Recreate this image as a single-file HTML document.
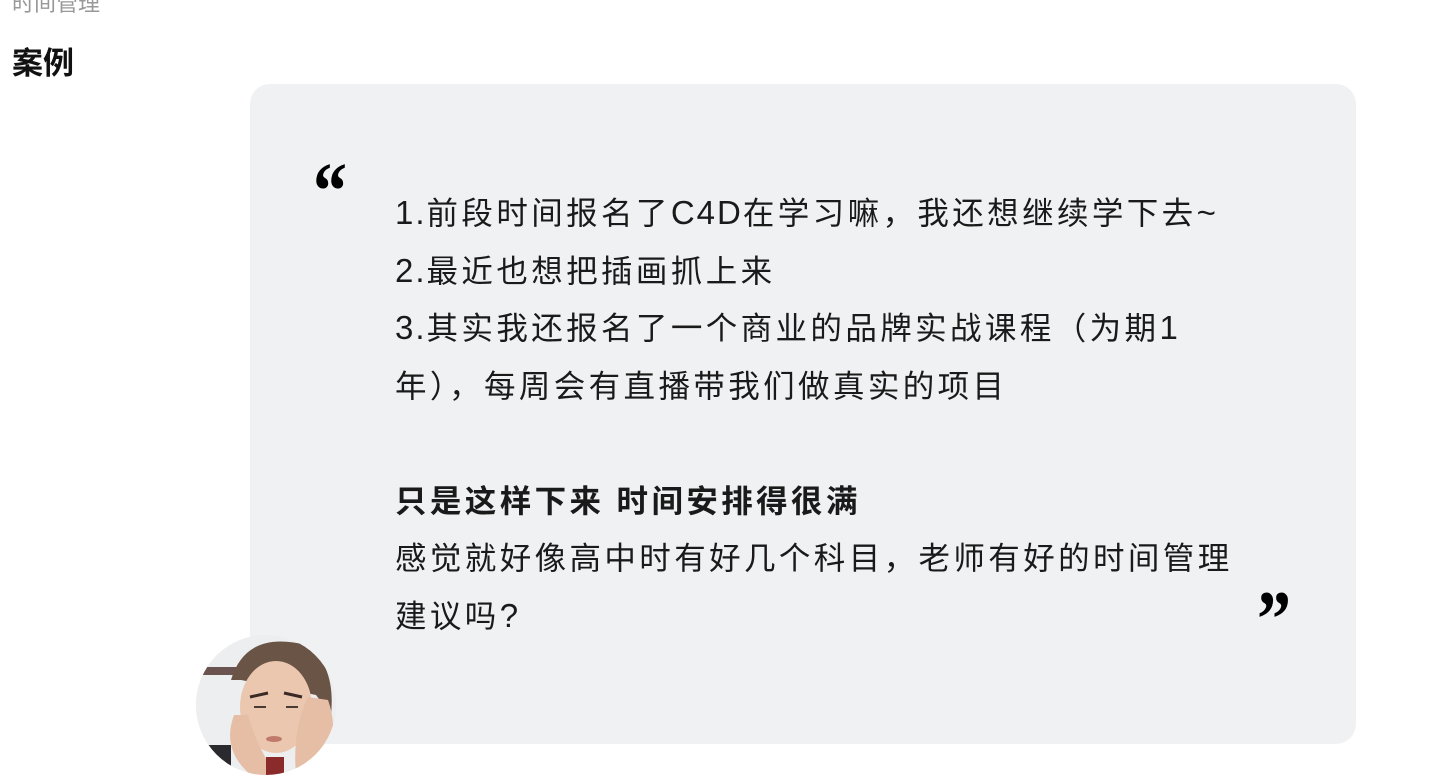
<!DOCTYPE html>
<html><head><meta charset="utf-8"><style>
html,body{margin:0;padding:0;background:#fff;width:1446px;height:782px;overflow:hidden;position:relative;font-family:"Liberation Sans","Noto Sans CJK SC",sans-serif}
.top{position:absolute;left:12px;top:-14px;font-size:22px;color:#999}
.h{position:absolute;left:12px;top:38px;font-size:31px;font-weight:bold;color:#111}
.card{position:absolute;left:250px;top:84px;width:1106px;height:660px;background:#f0f1f3;border-radius:20px}
.txt{position:absolute;left:395px;top:185px;width:846px;font-size:31.5px;line-height:57.5px;letter-spacing:3.4px;color:#1a1a1a}
.l{letter-spacing:2px;font-size:33px;line-height:1}
.q{position:absolute;font-family:"Liberation Serif",serif;font-weight:bold;font-size:80px;line-height:1;color:#000}
.av{position:absolute;left:196px;top:635px;width:140px;height:140px;border-radius:50%;overflow:hidden;background:#e8e8ea}
</style></head><body>
<div class="top">时间管理</div>
<div class="h">案例</div>
<div class="card"></div>
<div class="q" style="left:313px;top:152px;transform:scaleX(0.85);transform-origin:left">“</div>
<div class="q" style="left:1257px;top:580px;transform:scaleX(0.85);transform-origin:left">”</div>
<div class="txt"><span class="l">1.</span>前段时间报名了<span class="l">C4D</span>在学习嘛，我还想继续学下去<span class="l">~</span><br><span class="l">2.</span>最近也想把插画抓上来<br><span class="l">3.</span>其实我还报名了一个商业的品牌实战课程（为期<span class="l">1</span>年），每周会有直播带我们做真实的项目<br><br><b>只是这样下来 时间安排得很满</b><br>感觉就好像高中时有好几个科目，老师有好的时间管理建议吗<span class="l">?</span></div>
<div class="av"><svg width="140" height="140" viewBox="0 0 140 140">
<rect width="140" height="140" fill="#eceef0"/>
<rect x="0" y="32" width="55" height="8" fill="#6b5450"/>
<rect x="0" y="110" width="35" height="30" fill="#2a2a2e"/>
<path d="M35 45 Q50 -5 110 10 Q140 30 135 80 L120 60 L45 45 Z" fill="#6a5446"/>
<ellipse cx="80" cy="72" rx="36" ry="46" fill="#ecc7b0"/>
<path d="M38 80 Q25 115 55 140 L125 140 Q145 100 132 65 L112 62 Q96 95 100 140 L80 140 Q60 110 52 80 Z" fill="#e6bda5"/>
<rect x="70" y="122" width="18" height="18" fill="#8a2a2a"/>
<ellipse cx="78" cy="104" rx="8" ry="3" fill="#c07a6a"/>
<path d="M54 62 L72 58 M88 58 L106 62" stroke="#3a2a26" stroke-width="3"/>
<path d="M58 72 L70 72 M90 72 L102 72" stroke="#4a3a36" stroke-width="2"/>
</svg></div>
</body></html>
